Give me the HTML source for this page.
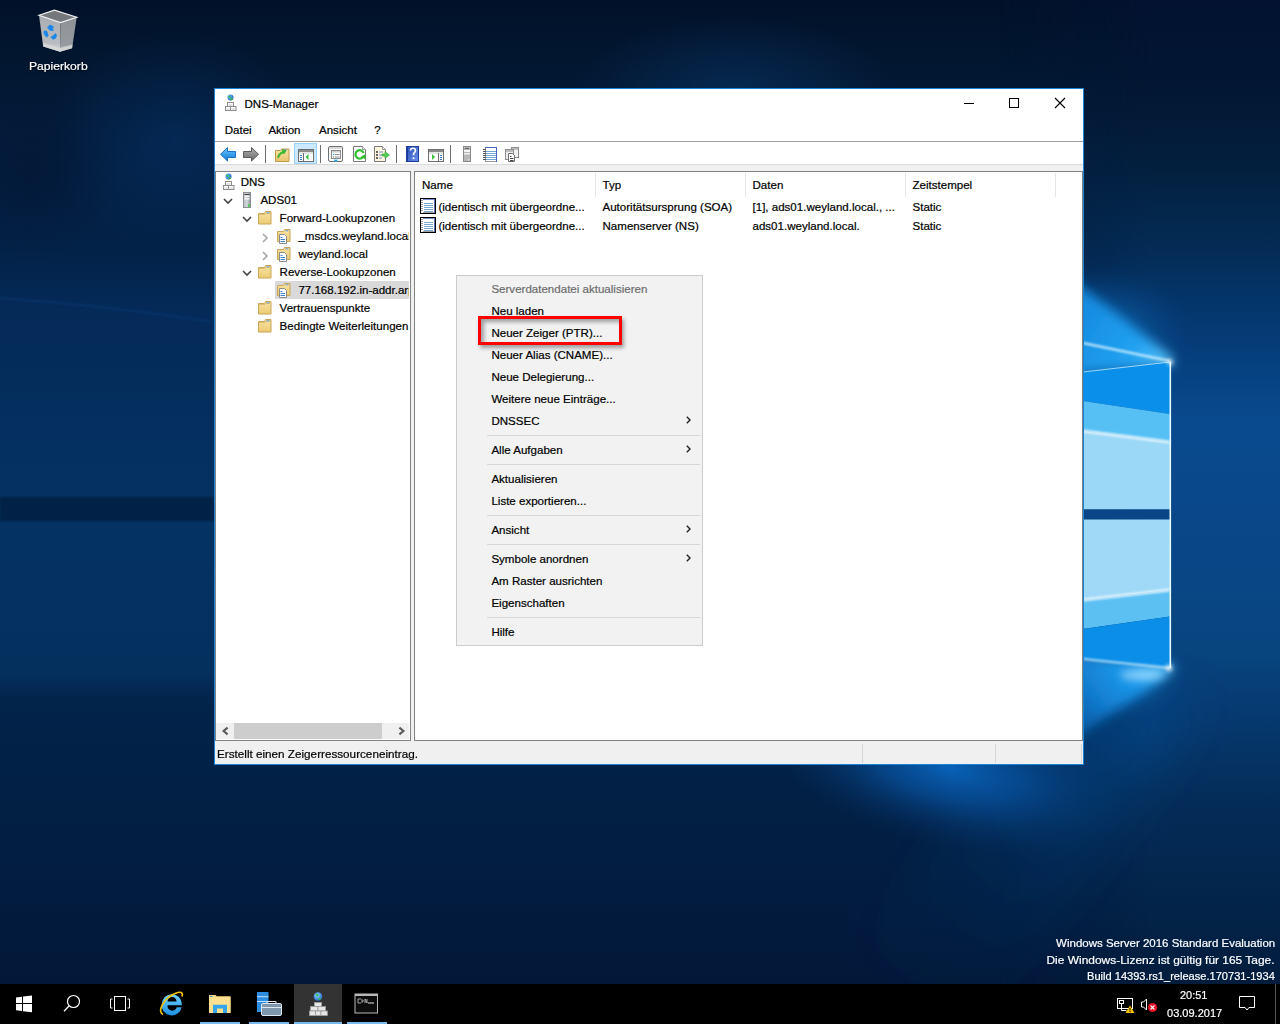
<!DOCTYPE html>
<html><head><meta charset="utf-8">
<style>
*{margin:0;padding:0;box-sizing:border-box}
html,body{width:1280px;height:1024px;overflow:hidden}
body{position:relative;font-family:"Liberation Sans",sans-serif;font-size:11.55px;color:#000;background:#05203f}
.a{position:absolute}
.t{position:absolute;white-space:nowrap;line-height:16px;height:16px;-webkit-text-stroke:0.2px currentColor}
svg{overflow:visible}
</style></head><body>
<svg id="bgsvg" class="a" style="left:0;top:0" width="1280" height="984" viewBox="0 0 1280 984">
<defs>
<linearGradient id="gBase" x1="0" y1="0" x2="0" y2="984" gradientUnits="userSpaceOnUse">
<stop offset="0" stop-color="#02112a"/>
<stop offset="0.07" stop-color="#021731"/>
<stop offset="0.152" stop-color="#031d3f"/>
<stop offset="0.254" stop-color="#032248"/>
<stop offset="0.315" stop-color="#042a58"/>
<stop offset="0.457" stop-color="#04305f"/>
<stop offset="0.53" stop-color="#043262"/>
<stop offset="0.685" stop-color="#04305e"/>
<stop offset="0.712" stop-color="#02234a"/>
<stop offset="0.864" stop-color="#021e42"/>
<stop offset="1" stop-color="#021838"/>
</linearGradient>
<linearGradient id="gRight" x1="0" y1="0" x2="0" y2="984" gradientUnits="userSpaceOnUse">
<stop offset="0" stop-color="#021230"/>
<stop offset="0.061" stop-color="#021532"/>
<stop offset="0.102" stop-color="#031834"/>
<stop offset="0.173" stop-color="#03203f"/>
<stop offset="0.254" stop-color="#042c56"/>
<stop offset="0.305" stop-color="#04356a"/>
<stop offset="0.38" stop-color="#064282"/>
<stop offset="0.43" stop-color="#094a8e"/>
<stop offset="0.56" stop-color="#094688"/>
<stop offset="0.66" stop-color="#08457f"/>
<stop offset="0.711" stop-color="#063c74"/>
<stop offset="0.813" stop-color="#042c58"/>
<stop offset="0.945" stop-color="#032246"/>
<stop offset="1" stop-color="#021c3c"/>
</linearGradient>
<linearGradient id="gRightMask" x1="1000" y1="0" x2="1150" y2="0" gradientUnits="userSpaceOnUse">
<stop offset="0" stop-color="#fff" stop-opacity="0"/>
<stop offset="1" stop-color="#fff" stop-opacity="1"/>
</linearGradient>
<mask id="mRight"><rect x="1000" y="0" width="280" height="984" fill="url(#gRightMask)"/></mask>
<radialGradient id="gGlowB" cx="950" cy="768" r="190" gradientUnits="userSpaceOnUse" gradientTransform="translate(950 768) rotate(12) scale(1 0.42) translate(-950 -768)">
<stop offset="0" stop-color="#0862b8" stop-opacity="1"/>
<stop offset="0.4" stop-color="#0752a0" stop-opacity="0.7"/>
<stop offset="1" stop-color="#053060" stop-opacity="0"/>
</radialGradient>
<linearGradient id="gBeam" x1="1083" y1="700" x2="850" y2="984" gradientUnits="userSpaceOnUse">
<stop offset="0" stop-color="#0a56a2" stop-opacity="0.35"/>
<stop offset="1" stop-color="#0a3a75" stop-opacity="0"/>
</linearGradient>
<filter id="blur12" x="-50%" y="-50%" width="200%" height="200%"><feGaussianBlur stdDeviation="25"/></filter>
<radialGradient id="gGlowTopStrip" cx="735" cy="88" r="160" gradientUnits="userSpaceOnUse" gradientTransform="translate(735 88) scale(1 0.45) translate(-735 -88)">
<stop offset="0" stop-color="#06284f" stop-opacity="1"/>
<stop offset="1" stop-color="#06284f" stop-opacity="0"/>
</radialGradient>
<radialGradient id="gGlowTop" cx="1083" cy="352" r="110" gradientUnits="userSpaceOnUse" gradientTransform="translate(1083 352) rotate(-20) scale(1 0.75) translate(-1083 -352)">
<stop offset="0" stop-color="#1ea4f6" stop-opacity="1"/>
<stop offset="0.4" stop-color="#1488e2" stop-opacity="0.8"/>
<stop offset="1" stop-color="#0a4a90" stop-opacity="0"/>
</radialGradient>
<radialGradient id="gGlowBot" cx="1110" cy="675" r="80" gradientUnits="userSpaceOnUse" gradientTransform="translate(1110 675) scale(1 0.6) translate(-1110 -675)">
<stop offset="0" stop-color="#3cb8ff" stop-opacity="1"/>
<stop offset="0.5" stop-color="#1a90e6" stop-opacity="0.8"/>
<stop offset="1" stop-color="#0a4a90" stop-opacity="0"/>
</radialGradient>
<radialGradient id="gPatchL"><stop offset="0" stop-color="#06346a" stop-opacity="0.5"/><stop offset="1" stop-color="#06346a" stop-opacity="0"/></radialGradient>
<radialGradient id="gPatchD"><stop offset="0" stop-color="#021530" stop-opacity="0.55"/><stop offset="1" stop-color="#021530" stop-opacity="0"/></radialGradient>
<linearGradient id="gCone" x1="1170" y1="362" x2="1070" y2="300" gradientUnits="userSpaceOnUse">
<stop offset="0" stop-color="#5cc8ff"/>
<stop offset="0.3" stop-color="#22a2f2"/>
<stop offset="1" stop-color="#1286dc"/>
</linearGradient>
<linearGradient id="gCone2" x1="1170" y1="668" x2="1080" y2="730" gradientUnits="userSpaceOnUse">
<stop offset="0" stop-color="#4cc0ff"/>
<stop offset="0.3" stop-color="#1c9cf0"/>
<stop offset="1" stop-color="#0f7ad4" stop-opacity="0.6"/>
</linearGradient>
<filter id="blur6" x="-50%" y="-50%" width="200%" height="200%"><feGaussianBlur stdDeviation="6"/></filter>
<filter id="blur1" x="-50%" y="-50%" width="200%" height="200%"><feGaussianBlur stdDeviation="1"/></filter>
<filter id="blur2" x="-200%" y="-200%" width="500%" height="500%"><feGaussianBlur stdDeviation="2"/></filter>
<filter id="blur4" x="-100%" y="-100%" width="300%" height="300%"><feGaussianBlur stdDeviation="4"/></filter>
</defs>
<rect width="1280" height="984" fill="url(#gBase)"/>
<rect x="0" y="497" width="1083" height="24" fill="#021c3c" opacity="0.75" filter="url(#blur1)"/>
<ellipse cx="175" cy="140" rx="130" ry="110" fill="url(#gPatchL)"/>
<ellipse cx="30" cy="170" rx="90" ry="90" fill="url(#gPatchD)"/>
<path d="M0 298 Q110 306 214 322" fill="none" stroke="#0c4a88" stroke-width="2" opacity="0.35" filter="url(#blur1)"/>
<rect x="1000" y="0" width="280" height="984" fill="url(#gRight)" mask="url(#mRight)"/>
<rect x="0" y="0" width="1280" height="200" fill="url(#gGlowTopStrip)"/>
<polygon points="1060,690 1200,700 1010,984 820,984" fill="url(#gBeam)" filter="url(#blur12)"/>
<rect x="600" y="700" width="700" height="284" fill="url(#gGlowB)"/>
<rect x="950" y="210" width="300" height="290" fill="url(#gGlowTop)" opacity="0.6"/>
<polygon points="1060,270 1172,357 1172,366 1060,372" fill="url(#gCone)" filter="url(#blur6)"/>
<rect x="1020" y="620" width="190" height="110" fill="url(#gGlowBot)" opacity="0.4"/>
<polygon points="1060,655 1172,664 1172,672 1060,748" fill="url(#gCone2)" filter="url(#blur6)"/>
<!-- upper pane -->
<polygon points="1083,372 1170,362 1170,414 1083,401" fill="#0a90ea"/>
<polygon points="1083,401 1170,414 1170,442 1083,431" fill="#56c0f5"/>
<polygon points="1083,431 1170,442 1170,509.5 1083,509.5" fill="#9bd8f7"/>
<rect x="1083" y="509.5" width="88" height="10" fill="#0a4687"/>
<polygon points="1083,519.5 1170,519.5 1170,590 1083,600" fill="#a0d9f7"/>
<polygon points="1083,600 1170,590 1170,616.6 1083,629" fill="#5cc0f3"/>
<polygon points="1083,629 1170,616.6 1170,668 1083,659" fill="#0a8ee8"/>
<!-- streaks -->
<path d="M1083 343 L1170 361" stroke="#d8f4ff" stroke-width="2.5" opacity="0.8" filter="url(#blur1)"/>
<path d="M1083 372 L1170 362" stroke="#bfe9ff" stroke-width="1.2" opacity="0.8"/>
<path d="M1083 431 L1170 442" stroke="#e8f8ff" stroke-width="3" opacity="0.9" filter="url(#blur1)"/>
<path d="M1083 600 L1170 590" stroke="#e8f8ff" stroke-width="3" opacity="0.9" filter="url(#blur1)"/>
<path d="M1083 659 L1170 668" stroke="#d8f4ff" stroke-width="2" opacity="0.8" filter="url(#blur1)"/>
<line x1="1170.3" y1="362" x2="1170.3" y2="668" stroke="#e8f8ff" stroke-width="1.6"/>
<circle cx="1170" cy="362" r="2.5" fill="#ffffff" filter="url(#blur2)"/>
<circle cx="1169" cy="668" r="3" fill="#ffffff" filter="url(#blur2)"/>
<ellipse cx="1142" cy="675" rx="22" ry="5" fill="#bfe8ff" opacity="0.7" filter="url(#blur4)"/>
</svg>

<svg class="a" style="left:30px;top:4px" width="56" height="52" viewBox="30 4 56 52">
<defs>
<linearGradient id="rbL" x1="0" y1="0" x2="0" y2="1"><stop offset="0" stop-color="#a9acb0"/><stop offset="0.75" stop-color="#b9bcc0"/><stop offset="1" stop-color="#d8d8d8"/></linearGradient>
<linearGradient id="rbR" x1="0" y1="0" x2="0" y2="1"><stop offset="0" stop-color="#8e9297"/><stop offset="0.8" stop-color="#979b9f"/><stop offset="1" stop-color="#c8c8c8"/></linearGradient>
</defs>
<path d="M39 15.2 L60.5 22.5 L60 51.7 L43.2 46.6z" fill="url(#rbL)"/>
<path d="M60.5 22.5 L76.7 17.2 L72.1 48.2 L60 51.7z" fill="url(#rbR)"/>
<path d="M39 15.2 L54.4 10.1 L76.7 17.2 L60.5 22.5z" fill="#74787d" stroke="#f2f2f2" stroke-width="1.2"/>
<path d="M43 43 L60 48 L72.5 44.5 L72.1 48.2 L60 51.7 L43.2 46.6z" fill="#d9d9d9" opacity="0.8"/>
<g fill="#1b86e8">
<path d="M47 27.5 l3 -3 l3.8 2 l-1 2.5 l1.5 1.5 l-4 0.5z"/>
<path d="M44 30.5 l3 0.5 l1.5 4 l-1 2.5 l-2.5 -1.5 l-1.5 -3z"/>
<path d="M50.5 37 l3.5 -2.2 l1.2 -1.8 l1.8 2 l-1 3.2 l-3 1.5z"/>
</g>
</svg>
<div class="t" style="left:28.5px;top:58px;color:#fff;text-shadow:0 1px 2px #000;transform:scaleX(1.05);transform-origin:0 0">Papierkorb</div>
<div class="t" style="right:5px;top:935px;color:#fff;text-align:right;transform:scaleX(0.995);transform-origin:100% 0">Windows Server 2016 Standard Evaluation</div>
<div class="t" style="right:5px;top:952px;color:#fff;text-align:right;transform:scaleX(1.034);transform-origin:100% 0">Die Windows-Lizenz ist gültig für 165 Tage.</div>
<div class="t" style="right:5px;top:968px;color:#fff;text-align:right;transform:scaleX(0.959);transform-origin:100% 0">Build 14393.rs1_release.170731-1934</div>
<div class="a" style="left:214px;top:88px;width:870px;height:677px;background:#ffffff;border:1px solid #1883d7;box-sizing:border-box"></div>
<svg class="a" style="left:225px;top:94px;" width="12" height="18" viewBox="0 0 12 18"><defs><radialGradient id="glb1" cx="0.35" cy="0.35" r="0.7"><stop offset="0" stop-color="#6fc8ff"/><stop offset="1" stop-color="#1a58c0"/></radialGradient></defs>
<circle cx="5.5" cy="3.6" r="3" fill="url(#glb1)"/>
<path d="M3 2.6 l1.8 -1.2 l1 1.3 l-1.2 1.4z M5.6 4.6 l2.4 -0.8 l-0.8 2.3 l-1.6 0.3z" fill="#2fc23a"/>
<rect x="2.5" y="8.5" width="6" height="4" fill="#fff" stroke="#8e8e8e"/>
<rect x="0.5" y="12.5" width="5" height="4" fill="#fff" stroke="#8e8e8e"/>
<rect x="5.5" y="12.5" width="5.5" height="4" fill="#fff" stroke="#8e8e8e"/>
<rect x="3.5" y="10.5" width="4" height="1" fill="#c9c9c9"/>
<rect x="1.5" y="14.5" width="3" height="1" fill="#c9c9c9"/>
<rect x="6.5" y="14.5" width="3.5" height="1" fill="#c9c9c9"/></svg>
<div class="t" style="left:244.5px;top:96px">DNS-Manager</div>
<div class="a" style="left:964px;top:103px;width:10px;height:1px;background:#000;"></div>
<div class="a" style="left:1009px;top:98px;width:10px;height:10px;background:transparent;border:1px solid #000;box-sizing:border-box"></div>
<svg class="a" style="left:1055px;top:98px;" width="10" height="10" viewBox="0 0 10 10"><path d="M0 0 L10 10 M10 0 L0 10" stroke="#000" stroke-width="1.1"/></svg>
<div class="t" style="left:224.7px;top:122px">Datei</div>
<div class="t" style="left:268.4px;top:122px">Aktion</div>
<div class="t" style="left:319px;top:122px">Ansicht</div>
<div class="t" style="left:374.3px;top:122px">?</div>
<div class="a" style="left:215px;top:141px;width:868px;height:1px;background:#a0a0a0;"></div>
<div class="a" style="left:215px;top:164px;width:868px;height:1px;background:#dadada;"></div>
<div class="a" style="left:215px;top:165px;width:868px;height:6px;background:#f0f0f0;"></div>
<svg class="a" style="left:215px;top:142px" width="320" height="22" viewBox="215 142 320 22">
<defs>
<linearGradient id="tbBlue" x1="0" y1="0" x2="0" y2="1"><stop offset="0" stop-color="#6cc7ff"/><stop offset="1" stop-color="#0a7ad8"/></linearGradient>
<linearGradient id="tbGrey" x1="0" y1="0" x2="0" y2="1"><stop offset="0" stop-color="#b0b0b0"/><stop offset="1" stop-color="#6a6a6a"/></linearGradient>
<linearGradient id="tbHelp" x1="0" y1="0" x2="1" y2="1"><stop offset="0" stop-color="#2b4db5"/><stop offset="1" stop-color="#6a92ea"/></linearGradient>
<linearGradient id="tbFold" x1="0" y1="0" x2="0" y2="1"><stop offset="0" stop-color="#f8e4a8"/><stop offset="1" stop-color="#e9c46d"/></linearGradient>
</defs>
<!-- back -->
<path d="M220.5 154.3 L227.5 147.5 V151.5 H235.5 V157.5 H227.5 V161 Z" fill="url(#tbBlue)" stroke="#1d6fc4" stroke-width="1"/>
<!-- forward -->
<path d="M258.5 154.3 L251.5 147.5 V151.5 H243.5 V157.5 H251.5 V161 Z" fill="url(#tbGrey)" stroke="#5a5a5a" stroke-width="1"/>
<rect x="265" y="145" width="1" height="18" fill="#6e6e6e"/>
<!-- folder up -->
<path d="M275.5 150.5 h5 l1 -1.5 h7.5 v12.5 h-13.5z" fill="url(#tbFold)" stroke="#c29a4c"/>
<rect x="284" y="149.5" width="3" height="1" fill="#4f9ee8"/>
<path d="M277.5 157 C279 153 281 152 283 151.5 L282 149.5 L286 150.5 L284 154 L283.5 152.8 C281.5 153.5 279.5 155 278.5 158z" fill="#35c635" stroke="#22a022" stroke-width="0.6"/>
<!-- highlighted show/hide tree -->
<rect x="294.5" y="143.5" width="22" height="20" fill="#cce8ff" stroke="#99d1ff"/>
<rect x="298.5" y="149.5" width="15" height="12" fill="#fff" stroke="#6e6e6e"/>
<rect x="299" y="150" width="14" height="2" fill="#8a8a8a"/>
<rect x="299" y="152.5" width="14" height="1" fill="#c8c8c8"/>
<rect x="303" y="153" width="1" height="8" fill="#6e6e6e"/>
<g fill="#3a78c8"><rect x="300" y="155" width="2" height="1"/><rect x="300" y="157" width="2" height="1"/><rect x="300" y="159" width="2" height="1"/></g>
<path d="M308.5 154 L305.5 157 L308.5 160z" fill="#3cbf3c"/>
<rect x="320" y="145" width="1" height="18" fill="#6e6e6e"/>
<!-- properties window -->
<rect x="328.5" y="146.5" width="14" height="15" rx="1.5" fill="#fff" stroke="#707070"/>
<rect x="329" y="147" width="13" height="2" fill="#d8d8d8"/>
<rect x="331.5" y="150.5" width="9" height="8" fill="#fff" stroke="#8a8a8a"/>
<rect x="332" y="151" width="8" height="1.5" fill="#d0d0d0"/>
<rect x="333" y="153.8" width="1.2" height="1.2" fill="#1aa8ff"/>
<rect x="335" y="154" width="4.5" height="1" fill="#8a8a8a"/>
<rect x="333" y="156.3" width="1.2" height="1.2" fill="#8a8a8a"/>
<rect x="335" y="156.5" width="4.5" height="1" fill="#8a8a8a"/>
<rect x="334" y="159.6" width="3.5" height="1.6" fill="#27b2f5"/>
<!-- refresh doc -->
<path d="M353.5 146.5 h9 l3 3 v12 h-12z" fill="#fff" stroke="#7a7a7a"/>
<path d="M362.5 146.5 v3 h3" fill="#eee" stroke="#9a9a9a"/>
<path d="M362.8 157.2 A4.2 4.2 0 1 1 363.6 153" fill="none" stroke="#2ec02e" stroke-width="2.2"/>
<path d="M361 156.5 L365.5 159.5 L365.2 154.2z" fill="#2ec02e"/>
<!-- export list -->
<path d="M374.5 146.5 h8 l3 3 v12 h-11z" fill="#fdf5e0" stroke="#7a7a7a"/>
<path d="M382.5 146.5 v3 h3" fill="#eee" stroke="#9a9a9a"/>
<g fill="#222"><circle cx="377" cy="152" r="0.9"/><circle cx="377" cy="155" r="0.9"/><circle cx="377" cy="158" r="0.9"/></g>
<g fill="#7a8fc0"><rect x="379" y="151.5" width="4" height="1"/><rect x="379" y="154.5" width="3" height="1"/><rect x="379" y="157.5" width="3" height="1"/></g>
<path d="M382 154 h3 v-2.5 l4.5 3.5 l-4.5 3.5 v-2.5 h-3z" fill="#55cc55" stroke="#2fa82f" stroke-width="0.6"/>
<rect x="396" y="145" width="1" height="18" fill="#6e6e6e"/>
<!-- help -->
<rect x="406" y="146" width="13" height="16" fill="url(#tbHelp)"/>
<rect x="406" y="146" width="2" height="16" fill="#1b3a9a"/>
<rect x="406.5" y="146.5" width="12" height="15" fill="none" stroke="#1f3f9e"/>
<path d="M410.5 150.5 c0 -3 5 -3 5 0 c0 2 -2 2 -2 4 v0.8" fill="none" stroke="#fff" stroke-width="1.7"/>
<rect x="412.6" y="157.3" width="1.8" height="1.8" fill="#fff"/>
<!-- action pane -->
<rect x="428.5" y="149.5" width="15" height="12" fill="#fff" stroke="#6e6e6e"/>
<rect x="429" y="150" width="14" height="2" fill="#8a8a8a"/>
<rect x="429" y="152.5" width="14" height="1" fill="#c8c8c8"/>
<rect x="438" y="153" width="1" height="8" fill="#6e6e6e"/>
<g fill="#3a78c8"><rect x="440" y="155" width="2" height="1"/><rect x="440" y="157" width="2" height="1"/><rect x="440" y="159" width="2" height="1"/></g>
<path d="M432 154 L435 157 L432 160z" fill="#3cbf3c"/>
<rect x="450" y="145" width="1" height="18" fill="#6e6e6e"/>
<!-- server -->
<rect x="463.5" y="146.5" width="7" height="15" fill="#b9b9b9" stroke="#8a8a8a"/>
<rect x="464" y="147" width="6" height="2" fill="#e8e8e8"/>
<rect x="464.5" y="147.7" width="5" height="1" fill="#333"/>
<rect x="464" y="150" width="6" height="2" fill="#f6f6f6"/>
<rect x="464" y="153" width="6" height="1.5" fill="#f0f0f0"/>
<rect x="468" y="159" width="1.5" height="1.5" fill="#dcdcdc"/>
<!-- notebook -->
<rect x="485.5" y="147.5" width="11" height="14" fill="#fff" stroke="#9a9a9a"/>
<rect x="496" y="147" width="1" height="15" fill="#4a62c0"/>
<rect x="485" y="147" width="12" height="1" fill="#4a62c0"/>
<g fill="#74a6d4"><rect x="486" y="151" width="10" height="1"/><rect x="486" y="153" width="10" height="1"/><rect x="486" y="155" width="10" height="1"/><rect x="486" y="157" width="10" height="1"/><rect x="486" y="159" width="10" height="1"/></g>
<g fill="#555"><rect x="483" y="149" width="3" height="1"/><rect x="483" y="151" width="3" height="1"/><rect x="483" y="153" width="3" height="1"/><rect x="483" y="155" width="3" height="1"/><rect x="483" y="157" width="3" height="1"/><rect x="483" y="159" width="3" height="1"/></g>
<!-- copy -->
<rect x="511.5" y="147.5" width="7" height="10" fill="#f2f2f2" stroke="#8e8e8e"/>
<rect x="512" y="148" width="6" height="2" fill="#bdbdbd"/>
<rect x="505.5" y="149.5" width="8" height="10" fill="#eeeeee" stroke="#8e8e8e"/>
<rect x="506" y="150" width="7" height="2" fill="#bdbdbd"/>
<path d="M508.5 153.5 h4 l2 2 v6 h-6z" fill="#fff" stroke="#6e6e6e"/>
<g fill="#444"><rect x="510" y="156" width="1.5" height="1"/><rect x="510" y="158" width="3.5" height="1"/><rect x="510" y="160" width="3.5" height="1"/></g>
</svg>
<div class="a" style="left:215px;top:171px;width:196px;height:570px;background:#fff;border:1px solid #828282;box-sizing:border-box"></div>
<div class="a" style="left:411px;top:171px;width:3px;height:570px;background:#f0f0f0;"></div>
<div class="a" style="left:414px;top:171px;width:669px;height:570px;background:#fff;border:1px solid #828282;box-sizing:border-box"></div>
<svg class="a" style="left:223px;top:173px;" width="12" height="18" viewBox="0 0 12 18"><defs><radialGradient id="glb2" cx="0.35" cy="0.35" r="0.7"><stop offset="0" stop-color="#6fc8ff"/><stop offset="1" stop-color="#1a58c0"/></radialGradient></defs>
<circle cx="5.5" cy="3.6" r="3" fill="url(#glb2)"/>
<path d="M3 2.6 l1.8 -1.2 l1 1.3 l-1.2 1.4z M5.6 4.6 l2.4 -0.8 l-0.8 2.3 l-1.6 0.3z" fill="#2fc23a"/>
<rect x="2.5" y="8.5" width="6" height="4" fill="#fff" stroke="#8e8e8e"/>
<rect x="0.5" y="12.5" width="5" height="4" fill="#fff" stroke="#8e8e8e"/>
<rect x="5.5" y="12.5" width="5.5" height="4" fill="#fff" stroke="#8e8e8e"/>
<rect x="3.5" y="10.5" width="4" height="1" fill="#c9c9c9"/>
<rect x="1.5" y="14.5" width="3" height="1" fill="#c9c9c9"/>
<rect x="6.5" y="14.5" width="3.5" height="1" fill="#c9c9c9"/></svg>
<div class="t" style="left:240.7px;top:174px">DNS</div>
<svg class="a" style="left:223px;top:198px;" width="10" height="7" viewBox="0 0 10 7"><path d="M1 1 L5 5 L9 1" fill="none" stroke="#444" stroke-width="1.6"/></svg>
<svg class="a" style="left:243px;top:192px;" width="8" height="16" viewBox="0 0 8 16"><defs><linearGradient id="sv3" x1="0" x2="1"><stop offset="0" stop-color="#b8bdc2"/><stop offset="0.5" stop-color="#d5d9dc"/><stop offset="1" stop-color="#8c9196"/></linearGradient></defs>
<rect x="0.5" y="0.5" width="7" height="15" fill="url(#sv3)" stroke="#8a8f94"/>
<rect x="1.5" y="2" width="5" height="1" fill="#3a3a3a"/>
<rect x="1.5" y="3.5" width="5" height="1.6" fill="#f4f4f4"/>
<rect x="1.5" y="6" width="5" height="1.6" fill="#f4f4f4"/>
<rect x="5" y="12.5" width="2" height="2" fill="#3ed13e"/></svg>
<div class="t" style="left:260.4px;top:192px">ADS01</div>
<svg class="a" style="left:242px;top:216px;" width="10" height="7" viewBox="0 0 10 7"><path d="M1 1 L5 5 L9 1" fill="none" stroke="#444" stroke-width="1.6"/></svg>
<svg class="a" style="left:258px;top:211px;" width="14" height="14" viewBox="0 0 14 14"><defs><linearGradient id="fd4" x1="0" y1="0" x2="0" y2="1"><stop offset="0" stop-color="#f8e3a3"/><stop offset="1" stop-color="#eccb73"/></linearGradient></defs>
<path d="M0.5 2.5 h6 l1 -2 h5.5 v12.5 h-12.5z" fill="url(#fd4)" stroke="#c9a659"/>
<path d="M0.5 3.5 h6.5 l1 -1.2 h4.5" fill="none" stroke="#d8b868" stroke-width="0.8"/>
<rect x="8.5" y="1.3" width="3" height="1" fill="#5aa0e0"/></svg>
<div class="t" style="left:279.6px;top:210px">Forward-Lookupzonen</div>
<svg class="a" style="left:262px;top:233px;" width="7" height="10" viewBox="0 0 7 10"><path d="M1 1 L5 5 L1 9" fill="none" stroke="#a6a6a6" stroke-width="1.6"/></svg>
<svg class="a" style="left:277px;top:229px;" width="14" height="16" viewBox="0 0 14 16"><defs><linearGradient id="zf5" x1="0" y1="0" x2="0" y2="1"><stop offset="0" stop-color="#f8e3a3"/><stop offset="1" stop-color="#eccb73"/></linearGradient></defs>
<path d="M0.5 2.5 h6 l1 -2 h5.5 v12 h-12.5z" fill="url(#zf5)" stroke="#c9a659"/>
<rect x="8.5" y="1.3" width="3" height="1" fill="#5aa0e0"/>
<path d="M2.5 5.5 h5 l2 2 v7 h-7z" fill="#fff" stroke="#8a8a8a"/>
<rect x="3.5" y="8" width="2" height="1" fill="#3d7fd0"/>
<rect x="3.5" y="10" width="4.5" height="1" fill="#3d7fd0"/>
<rect x="3.5" y="12" width="4.5" height="1" fill="#3d7fd0"/></svg>
<div class="a" style="left:296px;top:226px;width:113px;height:18px;overflow:hidden"><div class="t" style="left:2.4px;top:2px">_msdcs.weyland.local</div>
</div><svg class="a" style="left:262px;top:251px;" width="7" height="10" viewBox="0 0 7 10"><path d="M1 1 L5 5 L1 9" fill="none" stroke="#a6a6a6" stroke-width="1.6"/></svg>
<svg class="a" style="left:277px;top:247px;" width="14" height="16" viewBox="0 0 14 16"><defs><linearGradient id="zf6" x1="0" y1="0" x2="0" y2="1"><stop offset="0" stop-color="#f8e3a3"/><stop offset="1" stop-color="#eccb73"/></linearGradient></defs>
<path d="M0.5 2.5 h6 l1 -2 h5.5 v12 h-12.5z" fill="url(#zf6)" stroke="#c9a659"/>
<rect x="8.5" y="1.3" width="3" height="1" fill="#5aa0e0"/>
<path d="M2.5 5.5 h5 l2 2 v7 h-7z" fill="#fff" stroke="#8a8a8a"/>
<rect x="3.5" y="8" width="2" height="1" fill="#3d7fd0"/>
<rect x="3.5" y="10" width="4.5" height="1" fill="#3d7fd0"/>
<rect x="3.5" y="12" width="4.5" height="1" fill="#3d7fd0"/></svg>
<div class="t" style="left:298.4px;top:246px">weyland.local</div>
<svg class="a" style="left:242px;top:270px;" width="10" height="7" viewBox="0 0 10 7"><path d="M1 1 L5 5 L9 1" fill="none" stroke="#444" stroke-width="1.6"/></svg>
<svg class="a" style="left:258px;top:265px;" width="14" height="14" viewBox="0 0 14 14"><defs><linearGradient id="fd7" x1="0" y1="0" x2="0" y2="1"><stop offset="0" stop-color="#f8e3a3"/><stop offset="1" stop-color="#eccb73"/></linearGradient></defs>
<path d="M0.5 2.5 h6 l1 -2 h5.5 v12.5 h-12.5z" fill="url(#fd7)" stroke="#c9a659"/>
<path d="M0.5 3.5 h6.5 l1 -1.2 h4.5" fill="none" stroke="#d8b868" stroke-width="0.8"/>
<rect x="8.5" y="1.3" width="3" height="1" fill="#5aa0e0"/></svg>
<div class="t" style="left:279.6px;top:264px">Reverse-Lookupzonen</div>
<div class="a" style="left:275px;top:281px;width:134px;height:18px;background:#d9d9d9;"></div>
<svg class="a" style="left:277px;top:283px;" width="14" height="16" viewBox="0 0 14 16"><defs><linearGradient id="zf8" x1="0" y1="0" x2="0" y2="1"><stop offset="0" stop-color="#f8e3a3"/><stop offset="1" stop-color="#eccb73"/></linearGradient></defs>
<path d="M0.5 2.5 h6 l1 -2 h5.5 v12 h-12.5z" fill="url(#zf8)" stroke="#c9a659"/>
<rect x="8.5" y="1.3" width="3" height="1" fill="#5aa0e0"/>
<path d="M2.5 5.5 h5 l2 2 v7 h-7z" fill="#fff" stroke="#8a8a8a"/>
<rect x="3.5" y="8" width="2" height="1" fill="#3d7fd0"/>
<rect x="3.5" y="10" width="4.5" height="1" fill="#3d7fd0"/>
<rect x="3.5" y="12" width="4.5" height="1" fill="#3d7fd0"/></svg>
<div class="a" style="left:296px;top:280px;width:113px;height:18px;overflow:hidden"><div class="t" style="left:2.4px;top:2px">77.168.192.in-addr.arpa</div>
</div><svg class="a" style="left:258px;top:301px;" width="14" height="14" viewBox="0 0 14 14"><defs><linearGradient id="fd9" x1="0" y1="0" x2="0" y2="1"><stop offset="0" stop-color="#f8e3a3"/><stop offset="1" stop-color="#eccb73"/></linearGradient></defs>
<path d="M0.5 2.5 h6 l1 -2 h5.5 v12.5 h-12.5z" fill="url(#fd9)" stroke="#c9a659"/>
<path d="M0.5 3.5 h6.5 l1 -1.2 h4.5" fill="none" stroke="#d8b868" stroke-width="0.8"/>
<rect x="8.5" y="1.3" width="3" height="1" fill="#5aa0e0"/></svg>
<div class="t" style="left:279.6px;top:300px">Vertrauenspunkte</div>
<svg class="a" style="left:258px;top:319px;" width="14" height="14" viewBox="0 0 14 14"><defs><linearGradient id="fd10" x1="0" y1="0" x2="0" y2="1"><stop offset="0" stop-color="#f8e3a3"/><stop offset="1" stop-color="#eccb73"/></linearGradient></defs>
<path d="M0.5 2.5 h6 l1 -2 h5.5 v12.5 h-12.5z" fill="url(#fd10)" stroke="#c9a659"/>
<path d="M0.5 3.5 h6.5 l1 -1.2 h4.5" fill="none" stroke="#d8b868" stroke-width="0.8"/>
<rect x="8.5" y="1.3" width="3" height="1" fill="#5aa0e0"/></svg>
<div class="a" style="left:276px;top:316px;width:133px;height:18px;overflow:hidden"><div class="t" style="left:3.6px;top:2px">Bedingte Weiterleitungen</div>
</div><div class="a" style="left:216px;top:723px;width:193px;height:16px;background:#f0f0f0;"></div>
<div class="a" style="left:234px;top:723px;width:148px;height:16px;background:#cdcdcd;"></div>
<svg class="a" style="left:222px;top:727px;" width="7" height="8" viewBox="0 0 7 8"><path d="M5.6 0.6 L1.6 4 L5.6 7.4" fill="none" stroke="#5a5a5a" stroke-width="2.1"/></svg>
<svg class="a" style="left:398px;top:727px;" width="7" height="8" viewBox="0 0 7 8"><path d="M1.4 0.6 L5.4 4 L1.4 7.4" fill="none" stroke="#5a5a5a" stroke-width="2.1"/></svg>
<div class="t" style="left:422px;top:177px">Name</div>
<div class="t" style="left:602.5px;top:177px">Typ</div>
<div class="t" style="left:752.5px;top:177px">Daten</div>
<div class="t" style="left:912.5px;top:177px">Zeitstempel</div>
<div class="a" style="left:595px;top:173px;width:1px;height:24px;background:#e5e5e5;"></div>
<div class="a" style="left:745px;top:173px;width:1px;height:24px;background:#e5e5e5;"></div>
<div class="a" style="left:905px;top:173px;width:1px;height:24px;background:#e5e5e5;"></div>
<div class="a" style="left:1055px;top:173px;width:1px;height:24px;background:#e5e5e5;"></div>
<svg class="a" style="left:420px;top:198px;" width="16" height="16" viewBox="0 0 16 16"><rect x="0" y="0" width="16" height="16" fill="#000"/>
<rect x="1" y="1" width="14" height="14" fill="#fff"/>
<rect x="14" y="1" width="1" height="14" fill="#5a6fc0"/>
<rect x="3" y="1" width="11" height="1" fill="#7b8fd6"/>
<rect x="3" y="14" width="11" height="1" fill="#a0a0a0"/>
<g fill="#7aa7cf"><rect x="4" y="5" width="9" height="1"/><rect x="4" y="7" width="9" height="1"/><rect x="4" y="9" width="9" height="1"/><rect x="4" y="11" width="9" height="1"/><rect x="4" y="13" width="9" height="1"/></g>
<g fill="#9a9a9a"><rect x="1" y="2" width="2" height="1"/><rect x="1" y="4" width="2" height="1"/><rect x="1" y="6" width="2" height="1"/><rect x="1" y="8" width="2" height="1"/><rect x="1" y="10" width="2" height="1"/><rect x="1" y="12" width="2" height="1"/></g></svg>
<div class="t" style="left:438.4px;top:199px">(identisch mit übergeordne...</div>
<div class="t" style="left:602.5px;top:199px">Autoritätsursprung (SOA)</div>
<div class="t" style="left:752.5px;top:199px">[1], ads01.weyland.local., ...</div>
<div class="t" style="left:912.5px;top:199px">Static</div>
<svg class="a" style="left:420px;top:217px;" width="16" height="16" viewBox="0 0 16 16"><rect x="0" y="0" width="16" height="16" fill="#000"/>
<rect x="1" y="1" width="14" height="14" fill="#fff"/>
<rect x="14" y="1" width="1" height="14" fill="#5a6fc0"/>
<rect x="3" y="1" width="11" height="1" fill="#7b8fd6"/>
<rect x="3" y="14" width="11" height="1" fill="#a0a0a0"/>
<g fill="#7aa7cf"><rect x="4" y="5" width="9" height="1"/><rect x="4" y="7" width="9" height="1"/><rect x="4" y="9" width="9" height="1"/><rect x="4" y="11" width="9" height="1"/><rect x="4" y="13" width="9" height="1"/></g>
<g fill="#9a9a9a"><rect x="1" y="2" width="2" height="1"/><rect x="1" y="4" width="2" height="1"/><rect x="1" y="6" width="2" height="1"/><rect x="1" y="8" width="2" height="1"/><rect x="1" y="10" width="2" height="1"/><rect x="1" y="12" width="2" height="1"/></g></svg>
<div class="t" style="left:438.4px;top:218px">(identisch mit übergeordne...</div>
<div class="t" style="left:602.5px;top:218px">Namenserver (NS)</div>
<div class="t" style="left:752.5px;top:218px">ads01.weyland.local.</div>
<div class="t" style="left:912.5px;top:218px">Static</div>
<div class="a" style="left:215px;top:741px;width:868px;height:23px;background:#f0f0f0;"></div>
<div class="t" style="left:216.7px;top:746px;transform:scaleX(1.013);transform-origin:0 0">Erstellt einen Zeigerressourceneintrag.</div>
<div class="a" style="left:862px;top:744px;width:1px;height:19px;background:#d7d7d7;"></div>
<div class="a" style="left:995px;top:744px;width:1px;height:19px;background:#d7d7d7;"></div>
<div class="a" style="left:1081px;top:744px;width:1px;height:19px;background:#d7d7d7;"></div>
<div class="a" style="left:456px;top:275px;width:247px;height:371px;background:#f2f2f2;border:1px solid #cccccc;box-sizing:border-box"></div>
<div class="t" style="left:491.4px;top:281px;color:#6d6d6d">Serverdatendatei aktualisieren</div>
<div class="t" style="left:491.4px;top:303px">Neu laden</div>
<div class="t" style="left:491.4px;top:325px">Neuer Zeiger (PTR)...</div>
<div class="t" style="left:491.4px;top:347px">Neuer Alias (CNAME)...</div>
<div class="t" style="left:491.4px;top:369px">Neue Delegierung...</div>
<div class="t" style="left:491.4px;top:391px">Weitere neue Einträge...</div>
<div class="t" style="left:491.4px;top:413px">DNSSEC</div>
<svg class="a" style="left:686px;top:416px;" width="5" height="8" viewBox="0 0 5 8"><path d="M0.8 0.8 L4 4 L0.8 7.2" fill="none" stroke="#222" stroke-width="1.4"/></svg>
<div class="t" style="left:491.4px;top:442px">Alle Aufgaben</div>
<svg class="a" style="left:686px;top:445px;" width="5" height="8" viewBox="0 0 5 8"><path d="M0.8 0.8 L4 4 L0.8 7.2" fill="none" stroke="#222" stroke-width="1.4"/></svg>
<div class="t" style="left:491.4px;top:471px">Aktualisieren</div>
<div class="t" style="left:491.4px;top:493px">Liste exportieren...</div>
<div class="t" style="left:491.4px;top:522px">Ansicht</div>
<svg class="a" style="left:686px;top:525px;" width="5" height="8" viewBox="0 0 5 8"><path d="M0.8 0.8 L4 4 L0.8 7.2" fill="none" stroke="#222" stroke-width="1.4"/></svg>
<div class="t" style="left:491.4px;top:551px">Symbole anordnen</div>
<svg class="a" style="left:686px;top:554px;" width="5" height="8" viewBox="0 0 5 8"><path d="M0.8 0.8 L4 4 L0.8 7.2" fill="none" stroke="#222" stroke-width="1.4"/></svg>
<div class="t" style="left:491.4px;top:573px">Am Raster ausrichten</div>
<div class="t" style="left:491.4px;top:595px">Eigenschaften</div>
<div class="t" style="left:491.4px;top:624px">Hilfe</div>
<div class="a" style="left:487px;top:435px;width:213px;height:1px;background:#d7d7d7;"></div>
<div class="a" style="left:487px;top:464px;width:213px;height:1px;background:#d7d7d7;"></div>
<div class="a" style="left:487px;top:515px;width:213px;height:1px;background:#d7d7d7;"></div>
<div class="a" style="left:487px;top:544px;width:213px;height:1px;background:#d7d7d7;"></div>
<div class="a" style="left:487px;top:617px;width:213px;height:1px;background:#d7d7d7;"></div>
<div class="a" style="left:478px;top:316px;width:144px;height:29px;border:3px solid #ff0000;box-sizing:border-box;box-shadow:2px 3px 4px rgba(0,0,0,0.35), inset 3px 3px 4px rgba(0,0,0,0.35)"></div>
<div class="a" style="left:0px;top:984px;width:1280px;height:40px;background:#000;"></div>
<svg class="a" style="left:0;top:984px" width="1280" height="40" viewBox="0 984 1280 40">
<defs>
<radialGradient id="tbGlobe" cx="0.4" cy="0.35" r="0.7"><stop offset="0" stop-color="#8fd8ff"/><stop offset="1" stop-color="#1f5fcf"/></radialGradient>
<linearGradient id="ieG" x1="0" y1="0" x2="0" y2="1"><stop offset="0" stop-color="#6fd3ff"/><stop offset="1" stop-color="#1b8fe0"/></linearGradient>
</defs>
<!-- start -->
<g fill="#fff">
<path d="M16 997.4 L22 996.7 V1003 H16z"/>
<path d="M23 996.6 L32 995.6 V1003 H23z"/>
<path d="M16 1004 H22 V1011 L16 1010.3z"/>
<path d="M23 1004 H32 V1012.2 L23 1011.2z"/>
</g>
<!-- search -->
<circle cx="73.5" cy="1001.5" r="6" fill="none" stroke="#fff" stroke-width="1.2"/>
<path d="M69.2 1005.8 L64 1011.2" stroke="#fff" stroke-width="1.3"/>
<!-- task view -->
<rect x="114.5" y="996.5" width="11" height="14" fill="none" stroke="#fff" stroke-width="1"/>
<path d="M112.5 999 h-2 v9 h2 M127.5 999 h2 v9 h-2" fill="none" stroke="#fff" stroke-width="1"/>
<!-- IE -->
<path d="M161.8 1004 a10 9.8 0 0 1 20 0 v1.2 h-14.2 a4.7 4.5 0 0 0 9.2 2 h4.8 a10 9.8 0 0 1 -19.8 -3.2z M167.6 1001.4 h9 a4.5 4.3 0 0 0 -9 0z" fill="url(#ieG)" fill-rule="evenodd"/>
<path d="M163 1014.5 C156.5 1011.5 164 998 175 993.5 C180.5 991.3 183.5 992 182 996.5" fill="none" stroke="#f5c400" stroke-width="1.6"/>
<!-- explorer -->
<path d="M209 995 h6.5 l1.2 1.2 h13.8 v16.8 h-21.5z" fill="#f8d77c"/>
<rect x="209" y="997" width="21.5" height="16" fill="#fbe08f"/>
<rect x="210" y="996" width="2.5" height="1" fill="#3a9be8"/>
<path d="M213 1004.7 h14 v8.3 h-4 v-4.4 h-6 v4.4 h-4z" fill="#35a4ea"/>
<!-- server manager -->
<rect x="257" y="992" width="11.5" height="20" fill="#2d8de0"/>
<rect x="257" y="996.2" width="11.5" height="1" fill="#bfe0ff"/>
<rect x="257" y="1001" width="11.5" height="1" fill="#bfe0ff"/>
<rect x="261.5" y="1003.5" width="20" height="12" rx="1.5" fill="#7f97ad" stroke="#dfe8f0" stroke-width="1"/>
<path d="M267 1003.5 v-2 h9 v2" fill="none" stroke="#dfe8f0" stroke-width="1"/>
<rect x="262" y="1007" width="19" height="1" fill="#dfe8f0"/>
<!-- DNS active -->
<rect x="294" y="984" width="48" height="40" fill="#333333"/>
<circle cx="318" cy="996.5" r="4.3" fill="url(#tbGlobe)"/>
<path d="M315.5 994.5 l2 -1 l1 1.5 l-1.3 1.6z M318.7 998 l2.4 -0.6 l-0.8 2.3 l-1.6 0.2z" fill="#35c23f"/>
<g fill="#e6e6e6" stroke="#9a9a9a" stroke-width="0.8">
<rect x="314.4" y="1002.4" width="7.2" height="4.2"/>
<rect x="310.4" y="1006.6" width="7.6" height="4.4"/>
<rect x="318" y="1006.6" width="7.6" height="4.4"/>
<rect x="309.4" y="1011" width="6" height="4.6"/>
<rect x="315.4" y="1011" width="5.6" height="4.6"/>
<rect x="321" y="1011" width="6.4" height="4.6"/>
</g>
<!-- cmd -->
<rect x="355" y="994" width="22.5" height="19" fill="#0c0c0c" stroke="#b8b8b8" stroke-width="1"/>
<rect x="355" y="994" width="22.5" height="2" fill="#b8b8b8"/>
<path d="M358 999 h3 M358 999 v4 h3 M362 999 v4 M362 1001 h2 M365 999 v4 M365 999 l2 4 v-4" fill="none" stroke="#c8c8c8" stroke-width="0.8"/>
<rect x="368" y="1002.5" width="6" height="1" fill="#e0e0e0"/>
<!-- underlines -->
<g fill="#76b9ed">
<rect x="200" y="1022" width="40" height="2"/>
<rect x="249" y="1022" width="40" height="2"/>
<rect x="294" y="1022" width="48" height="2"/>
<rect x="347" y="1022" width="40" height="2"/>
</g>
<!-- tray: network -->
<g fill="none" stroke="#fff" stroke-width="1">
<rect x="1117.5" y="998.5" width="15" height="10"/>
<rect x="1119.5" y="1000.5" width="4" height="3"/>
<path d="M1121.5 1003.5 v7 h5"/>
</g>
<path d="M1130 1005.5 L1134.5 1013 H1125.5z" fill="#f7c600"/>
<rect x="1129.5" y="1008" width="1" height="2.5" fill="#000"/>
<rect x="1129.5" y="1011" width="1" height="1" fill="#000"/>
<!-- volume -->
<path d="M1141.5 1002 h2 l3 -3 v11 l-3 -3 h-2z" fill="none" stroke="#fff" stroke-width="1"/>
<circle cx="1152.5" cy="1007.5" r="4.6" fill="#e81123"/>
<path d="M1150.5 1005.5 l4 4 M1154.5 1005.5 l-4 4" stroke="#fff" stroke-width="1.1"/>
<!-- notification -->
<path d="M1239.5 996.5 h15 v11 h-5.5 l-2 2.5 l-2 -2.5 h-5.5z" fill="none" stroke="#fff" stroke-width="1"/>
<rect x="1275" y="984" width="1" height="40" fill="#555"/>
</svg>
<div class="t" style="left:1179.5px;top:987px;color:#fff;transform:scaleX(0.948);transform-origin:0 0">20:51</div>
<div class="t" style="left:1166.5px;top:1005px;color:#fff;transform:scaleX(0.955);transform-origin:0 0">03.09.2017</div>
</body></html>
